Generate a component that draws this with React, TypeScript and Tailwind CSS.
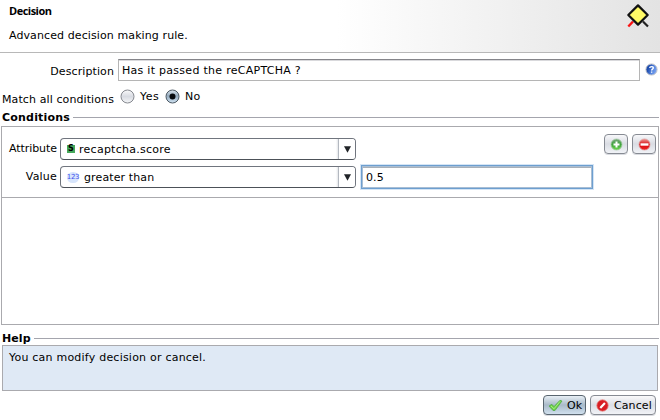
import React from 'react';

function Label({ children, className = '' }: { children: React.ReactNode; className?: string }) {
  return <span className={`block whitespace-pre leading-[14px] ${className}`}>{children}</span>;
}

function DecisionIcon() {
  return (
    <svg width="24" height="26" viewBox="0 0 24 26" className="block">
      <path d="M7 19.5L2.3 24.5" stroke="#fa1414" strokeWidth="2.4" />
      <path d="M17 19.5L22 24.5" stroke="#222" strokeWidth="2.2" />
      <path d="M12 3.4L21.7 13L12 22.6L2.3 13Z" fill="#fffa66" stroke="#111" strokeWidth="2.2" strokeLinejoin="round" />
    </svg>
  );
}

function HelpIcon() {
  return (
    <svg width="13" height="13" viewBox="0 0 13 13" className="block">
      <defs>
        <linearGradient id="help" x1="0" y1="0.3" x2="1" y2="0.7">
          <stop offset="0.2" stopColor="#1d4cae" />
          <stop offset="0.6" stopColor="#5585e0" />
          <stop offset="1" stopColor="#83a9f2" />
        </linearGradient>
      </defs>
      <circle cx="6.5" cy="6.5" r="5.6" fill="url(#help)" stroke="#c5c5c8" />
      <path d="M4.7 5C4.9 3.1 8.3 3.1 8.3 5C8.3 6.1 6.6 6.2 6.6 7.4M6.6 8.5V9.7" fill="none" stroke="#fff" strokeWidth="1.4" />
    </svg>
  );
}

function Radio({ checked = false }: { checked?: boolean }) {
  return (
    <svg width="15" height="15" viewBox="0 0 15 15" className="block">
      <defs>
        <linearGradient id="radio-off" x1="0" y1="0" x2="0" y2="1">
          <stop offset="0" stopColor="#fafafb" />
          <stop offset=".5" stopColor="#d8dbe2" />
          <stop offset="1" stopColor="#f5f6f8" />
        </linearGradient>
        <linearGradient id="radio-on" x1="0" y1="0" x2="0" y2="1">
          <stop offset="0" stopColor="#e1e9f0" />
          <stop offset=".45" stopColor="#93a9bc" />
          <stop offset="1" stopColor="#d1e4f4" />
        </linearGradient>
      </defs>
      <circle cx="7.5" cy="7.5" r="6.5" fill={checked ? 'url(#radio-on)' : 'url(#radio-off)'} stroke={checked ? '#4c5964' : '#868990'} />
      {checked && <circle cx="7.5" cy="7.5" r="3" fill="#080a0d" />}
    </svg>
  );
}

function GroupTitle({ title, className = '' }: { title: string; className?: string }) {
  return (
    <div className="flex h-[14px] items-center gap-[3px]">
      <Label className={`pt-px font-bold ${className}`}>{title}</Label>
      <div className="h-px flex-1 bg-[#a4a5ad]" />
    </div>
  );
}

function Combo({ children }: { children: React.ReactNode }) {
  return (
    <div className="flex h-[22px] w-[296px] overflow-hidden rounded-[4px] border border-[#70757e] border-b-[#4c5158] bg-white">
      <div className="flex flex-1 items-center pl-[6px]">{children}</div>
      <div className="w-[2px] bg-linear-to-r from-white to-[#e4e6e9]" />
      <div className="flex w-[17px] items-center justify-center border-l border-[#b3b8c0] bg-white">
        <svg width="7" height="7" viewBox="0 0 7 7"><path d="M0 .3H7L3.5 6.7Z" fill="#202327" /></svg>
      </div>
    </div>
  );
}

const buttonFace = 'flex items-center rounded-[4px] border shadow-[0_1px_0_#d9dbe0]';

function RoundButton({ kind }: { kind: 'add' | 'remove' }) {
  return (
    <button className={`${buttonFace} h-[20px] w-[24px] justify-center border-[#878b93] bg-linear-to-b from-[#f8f8fa] via-[#d9dce3] to-[#f1f3f7]`}>
      <svg width="13" height="13" viewBox="0 0 13 13">
        <defs>
          <linearGradient id={kind} x1="0" y1="0" x2="0" y2="1">
            <stop offset="0" stopColor={kind === 'add' ? '#78a87c' : '#ed9792'} />
            <stop offset=".5" stopColor={kind === 'add' ? '#3da33c' : '#d80d12'} />
            <stop offset="1" stopColor={kind === 'add' ? '#6fda4e' : '#ee2424'} />
          </linearGradient>
        </defs>
        <circle cx="6.5" cy="6.5" r="5.5" fill={`url(#${kind})`} stroke={kind === 'add' ? '#a2c8a2' : '#df9998'} strokeWidth=".8" />
        {kind === 'add'
          ? <path d="M6.5 3.5V9.5M3.5 6.5H9.5" stroke="#fff" strokeWidth="2" />
          : <path d="M2.5 6.5H10.5" stroke="#fff" strokeWidth="2.4" />}
      </svg>
    </button>
  );
}

export default function App() {
  return (
    <div className="flex h-[420px] w-[660px] flex-col overflow-hidden bg-white font-['DejaVu_Sans',sans-serif] text-[11px] text-black">
      <header className="flex h-[53px] shrink-0 justify-between border-b border-[#b8b8b8] bg-[linear-gradient(90deg,#fff_0%,#fff_51%,#e3e3e3_100%)]">
        <div className="pl-[9px] pt-[4px]">
          <Label className="font-['Open_Sans',sans-serif] font-bold tracking-[-0.5px]">Decision</Label>
          <Label className="mt-[11px] tracking-[0.1px]">Advanced decision making rule.</Label>
        </div>
        <div className="mr-[10px] mt-[2px]"><DecisionIcon /></div>
      </header>

      <div className="mt-[6px] flex h-[22px] shrink-0">
        <Label className="w-[114px] pt-[6px] text-right tracking-[0.1px]">Description</Label>
        <div className="ml-[4px] w-[522px] border border-[#b5b5b5] border-t-[#85858a] pl-[3px] pt-[4px] shadow-[inset_0_1px_0_#d9d9dc]">
          <Label className="tracking-[0.28px]">Has it passed the reCAPTCHA ?</Label>
        </div>
        <div className="ml-[5px] mt-[4px]"><HelpIcon /></div>
      </div>

      <div className="mt-[8px] flex h-[17px] shrink-0">
        <Label className="w-[114px] pt-[4px] text-right tracking-[0.1px]">Match all conditions</Label>
        <div className="ml-[6px]"><Radio /></div>
        <Label className="ml-[5px] w-[25px] pt-px tracking-[0.5px]">Yes</Label>
        <Radio checked />
        <Label className="ml-[5px] pt-px tracking-[0.2px]">No</Label>
      </div>

      <div className="mt-[4px] pl-[2px] pr-px"><GroupTitle title="Conditions" className="tracking-[0.2px]" /></div>

      <section className="ml-px mr-px mt-[2px] h-[199px] shrink-0 border border-[#aaaaae]">
        <div className="flex h-[71px] border-b border-[#aaaaae]">
          <div className="flex flex-col gap-[6px] pt-[11px]">
            <div className="flex h-[22px]">
              <Label className="w-[55px] pt-[4px] text-right tracking-[-0.05px]">Attribute</Label>
              <div className="ml-[3px]">
                <Combo>
                  <span className="flex h-[8px] w-[8px] shrink-0 items-center justify-center bg-[#45a85b] text-[8px] font-bold leading-[8px]">S</span>
                  <Label className="ml-[4px] pt-px tracking-[0.26px]">recaptcha.score</Label>
                </Combo>
              </div>
            </div>
            <div className="flex h-[22px]">
              <Label className="w-[55px] pt-[4px] text-right tracking-[0.2px]">Value</Label>
              <div className="ml-[3px]">
                <Combo>
                  <span className="flex h-[11px] w-[12px] shrink-0 items-center justify-center rounded-full bg-[#d7e5fc] text-[7px] leading-[8px] tracking-[-0.3px] text-[#3f50ed]">123</span>
                  <Label className="ml-[5px] pt-px tracking-[0.12px]">greater than</Label>
                </Combo>
              </div>
            </div>
          </div>
          <div className="ml-[5px] mt-[38px] h-[24px] w-[232px] border border-[#6d9fd0] pl-[4px] pt-[5px] shadow-[inset_0_0_0_1px_#a9bed4,inset_0_2px_0_#a9b0b8,0_0_0_1px_#d5e5f5]">
            <Label className="tracking-[0.1px]">0.5</Label>
          </div>
          <div className="ml-[11px] mt-[7px] flex gap-[4px]"><RoundButton kind="add" /><RoundButton kind="remove" /></div>
        </div>
      </section>

      <div className="mt-[6px] pl-[2px] pr-px"><GroupTitle title="Help" className="tracking-[0.1px]" /></div>
      <section className="ml-[2px] mr-[2px] h-[46px] shrink-0 border border-[#aaaaae] bg-[#dfe9f5] pl-[6px] pt-[5px]">
        <Label className="tracking-[0.22px]">You can modify decision or cancel.</Label>
      </section>

      <footer className="mr-[4px] mt-[4px] flex justify-end gap-[4px]">
        <button className={`${buttonFace} h-[20px] w-[43px] border-[#59656f] bg-linear-to-b from-[#e8eff5] via-[#a9bac9] to-[#d0e0ee] pl-[4px]`}>
          <svg width="15" height="14" viewBox="0 0 15 14" className="shrink-0">
            <path d="M1 8L3.8 6.3L6 8.6L12 2.3L14 3L7 12.5L5 12.5Z" fill="#6cd047" stroke="#4ca545" strokeWidth=".7" />
            <path d="M3 8L6 10.8L12 3.4" fill="none" stroke="#a6ec86" />
          </svg>
          <Label className="ml-[4px] pt-px tracking-[0.1px]">Ok</Label>
        </button>
        <button className={`${buttonFace} h-[20px] w-[66px] border-[#878b93] bg-linear-to-b from-[#fafafb] via-[#dbdee5] to-[#f1f3f7] pl-[5px]`}>
          <svg width="13" height="13" viewBox="0 0 13 13" className="shrink-0">
            <circle cx="6.5" cy="6.5" r="5.7" fill="#d81d23" stroke="#e98b88" strokeWidth=".8" />
            <path d="M4.3 8.9L8.9 4.1" stroke="#fff" strokeWidth="2.2" />
          </svg>
          <Label className="ml-[5px] pt-px tracking-[0.1px]">Cancel</Label>
        </button>
      </footer>
    </div>
  );
}
